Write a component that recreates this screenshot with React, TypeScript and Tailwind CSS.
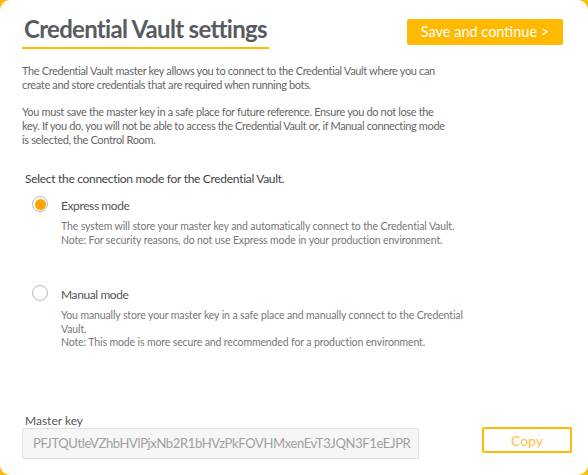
import React, { useState } from 'react'

function Radio({ checked, onClick }: { checked: boolean; onClick: () => void }) {
  return (
    <button
      onClick={onClick}
      className='-mt-[2px] flex h-[16px] w-[16px] shrink-0 items-center justify-center rounded-full border border-[#b8b8b8] bg-white'
    >
      {checked ? <span className='h-[11px] w-[11px] rounded-full bg-[#ffa400]' /> : null}
    </button>
  )
}

export default function App() {
  const [mode, setMode] = useState('express')
  const modes = [
    {
      id: 'express',
      title: 'Express mode',
      lines: [
        'The system will store your master key and automatically connect to the Credential Vault.',
        'Note: For security reasons, do not use Express mode in your production environment.',
      ],
    },
    {
      id: 'manual',
      title: 'Manual mode',
      lines: [
        'You manually store your master key in a safe place and manually connect to the Credential',
        'Vault.',
        'Note: This mode is more secure and recommended for a production environment.',
      ],
    },
  ]

  return (
    <div className='h-[475px] w-[588px] bg-[#ffb900] font-["Lato",sans-serif]'>
      <div className='flex h-full flex-col rounded-[10px] bg-white pr-[16px] pl-[22px]'>
        <div className='flex items-start justify-between pt-[14px]'>
          <h1 className='border-b-[2px] border-[#ffb900] px-[2px] pb-[3px] text-[24px] font-bold leading-[30px] tracking-[-0.7px] text-[#585b60]'>
            Credential Vault settings
          </h1>
          <button className='mt-[5px] mr-[9px] h-[26px] w-[156px] rounded-[2px] bg-[#ffb900] text-[14.5px] text-white'>
            Save and continue &gt;
          </button>
        </div>

        <div className='mt-[15px] text-[11px] leading-[14px] tracking-[-0.35px] text-[#666]'>
          <p>
            The Credential Vault master key allows you to connect to the Credential Vault where you can
            <br />
            create and store credentials that are required when running bots.
          </p>
          <p className='mt-[13px]'>
            You must save the master key in a safe place for future reference. Ensure you do not lose the
            <br />
            key. If you do, you will not be able to access the Credential Vault or, if Manual connecting mode
            <br />
            is selected, the Control Room.
          </p>
        </div>

        <p className='mt-[24px] pl-[3px] text-[12px] leading-[16px] tracking-[-0.3px] text-[#444]'>
          Select the connection mode for the Credential Vault.
        </p>

        <div className='mt-[11px] flex flex-col gap-[40px] pl-[10px]'>
          {modes.map((m) => (
            <div key={m.id} className='flex gap-[13px]'>
              <Radio checked={mode === m.id} onClick={() => setMode(m.id)} />
              <div>
                <h2 className='text-[12px] leading-[16px] tracking-[-0.4px] text-[#555]'>{m.title}</h2>
                <div className='mt-[6px] text-[10.5px] leading-[13.5px] tracking-[-0.12px] text-[#777]'>
                  {m.lines.map((l) => (
                    <p key={l}>{l}</p>
                  ))}
                </div>
              </div>
            </div>
          ))}
        </div>

        <div className='mt-auto mb-[16px]'>
          <label className='block pl-[3px] text-[12px] leading-[14px] text-[#555]'>Master key</label>
          <div className='flex items-start justify-between'>
            <div className='flex h-[31px] w-[397px] items-center overflow-hidden rounded-[2px] border border-[#e2e2e2] bg-[#f6f6f6] px-[10px] text-[13px] tracking-[-0.35px] whitespace-nowrap text-[#a0a0a0]'>
              PFJTQUtleVZhbHVlPjxNb2R1bHVzPkFOVHMxenEvT3JQN3F1eEJPR
            </div>
            <button className='-mt-[1px] h-[26px] w-[90px] rounded-[2px] border-2 border-[#ffb900] text-[14px] text-[#ffc04a]'>
              Copy
            </button>
          </div>
        </div>
      </div>
    </div>
  )
}
